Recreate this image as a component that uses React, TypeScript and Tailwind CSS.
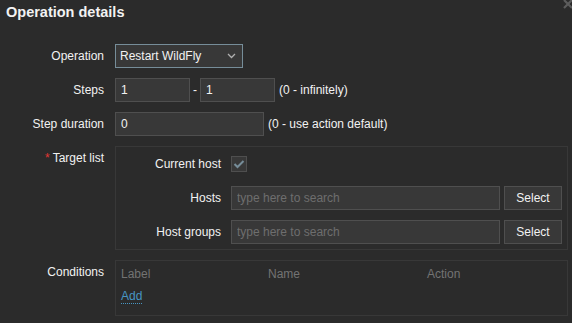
import React from "react";

const inputCls =
  "h-[24px] bg-[#383838] border border-[#4f4f4f] px-[5px] text-[12px] text-[#f2f2f2] outline-none placeholder:text-[#6e6e6e]";

function FieldRow({
  label,
  required,
  top,
  children,
}: {
  label: string;
  required?: boolean;
  top?: boolean;
  children: React.ReactNode;
}) {
  return (
    <div className={`flex ${top ? "items-start" : "items-center"}`}>
      <div
        className={`w-[104px] shrink-0 text-right leading-[14px] ${top ? "pt-[5px]" : ""}`}
      >
        {required && <span className="text-[#e33734] mr-[3px]">*</span>}
        {label}
      </div>
      <div className="ml-[11px] flex items-center">{children}</div>
    </div>
  );
}

export default function App() {
  return (
    <div className="relative h-[323px] w-[572px] overflow-hidden bg-[#2b2b2b] font-['Liberation_Sans',Arial,sans-serif] text-[12px] text-[#f2f2f2]">
      <svg
        className="absolute left-[562px] top-[-2px]"
        width="12"
        height="12"
        viewBox="0 0 12 12"
      >
        <path d="M2 2 L10 10 M10 2 L2 10" stroke="#5c5c5c" strokeWidth="2.2" />
      </svg>

      <div className="h-[44px] pl-[6px] pt-[4px]">
        <h4 className="text-[14.5px] font-bold leading-[16px]">Operation details</h4>
      </div>

      <div className="flex flex-col gap-[10px]">
        <FieldRow label="Operation">
          <div className="flex h-[24px] w-[128px] items-center justify-between border border-[#768d99] bg-[#383838] pl-[4px] pr-[6px]">
            <span>Restart WildFly</span>
            <svg width="9" height="6" viewBox="0 0 9 6">
              <polyline
                points="1,1 4.5,4.5 8,1"
                fill="none"
                stroke="#b0b0b0"
                strokeWidth="1.3"
              />
            </svg>
          </div>
        </FieldRow>

        <FieldRow label="Steps">
          <input className={`${inputCls} w-[75px]`} defaultValue="1" />
          <span className="mx-[3px]">-</span>
          <input className={`${inputCls} w-[75px]`} defaultValue="1" />
          <span className="ml-[4px]">(0 - infinitely)</span>
        </FieldRow>

        <FieldRow label="Step duration">
          <input className={`${inputCls} w-[149px]`} defaultValue="0" />
          <span className="ml-[4px]">(0 - use action default)</span>
        </FieldRow>

        <FieldRow label="Target list" required top>
          <div className="flex w-[453px] flex-col gap-[10px] border border-[#383838] pb-[5px] pr-[5px] pt-[5px]">
            <div className="flex h-[24px] items-center">
              <div className="w-[105px] text-right">Current host</div>
              <div className="ml-[10px] flex h-[16px] w-[16px] items-center justify-center border border-[#4f4f4f] bg-[#383838]">
                <svg width="12" height="10" viewBox="0 0 12 10">
                  <polyline
                    points="1.5,5 4.5,8 10.5,2"
                    fill="none"
                    stroke="#768d99"
                    strokeWidth="2"
                  />
                </svg>
              </div>
            </div>
            {["Hosts", "Host groups"].map((l) => (
              <div key={l} className="flex h-[24px] items-center">
                <div className="w-[105px] text-right">{l}</div>
                <input
                  className={`${inputCls} ml-[10px] w-[269px]`}
                  placeholder="type here to search"
                />
                <button className="ml-[4px] h-[24px] w-[58px] border border-[#4f4f4f] bg-[#383838] text-[12px] text-[#f2f2f2]">
                  Select
                </button>
              </div>
            ))}
          </div>
        </FieldRow>

        <FieldRow label="Conditions" top>
          <div className="h-[56px] w-[453px] border border-[#383838] pl-[5px] pt-[6px]">
            <div className="flex leading-[14px] text-[#737373]">
              <div className="w-[147px]">Label</div>
              <div className="w-[159px]">Name</div>
              <div>Action</div>
            </div>
            <div className="mt-[8px] leading-[14px]">
              <a className="border-b border-dotted border-[#4796c4] text-[#4796c4]">
                Add
              </a>
            </div>
          </div>
        </FieldRow>
      </div>
    </div>
  );
}
